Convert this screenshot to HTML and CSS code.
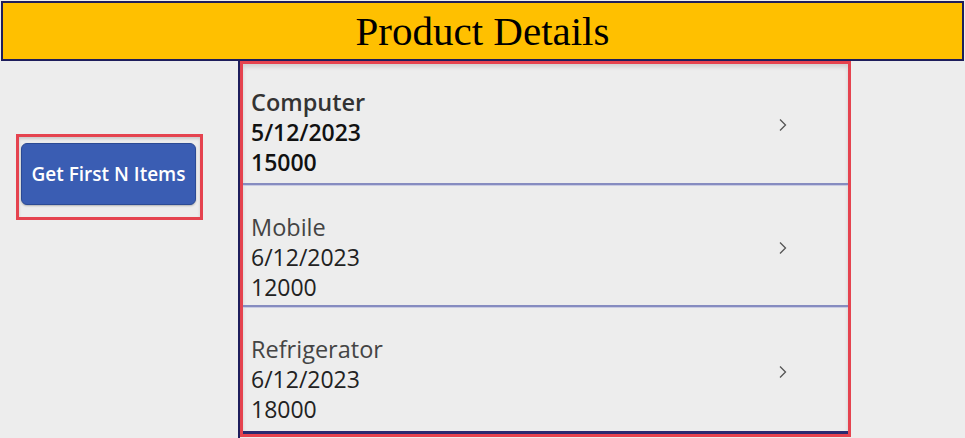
FILE: index.html
```html
<!DOCTYPE html>
<html lang="en">
<head>
<meta charset="UTF-8">
<title>Product Details</title>
<link rel="stylesheet" href="styles.css">
</head>
<body>
<div class="header">
    <h1>Product Details</h1>
</div>
<div class="screen">
    <div class="side">
        <div class="highlight btn-wrap">
            <button class="get-btn">Get First N Items</button>
        </div>
    </div>
    <div class="gallery">
        <div class="highlight list">
            <div class="item selected">
                <div class="lines">
                    <div class="title">Computer</div>
                    <div class="sub">5/12/2023</div>
                    <div class="sub">15000</div>
                </div>
                <svg class="chev" width="10" height="14" viewBox="0 0 10 14"><path d="M2 1.5 L7.5 7 L2 12.5" fill="none" stroke="#555" stroke-width="1.3"/></svg>
            </div>
            <div class="item">
                <div class="lines">
                    <div class="title">Mobile</div>
                    <div class="sub">6/12/2023</div>
                    <div class="sub">12000</div>
                </div>
                <svg class="chev" width="10" height="14" viewBox="0 0 10 14"><path d="M2 1.5 L7.5 7 L2 12.5" fill="none" stroke="#555" stroke-width="1.3"/></svg>
            </div>
            <div class="item last">
                <div class="lines">
                    <div class="title">Refrigerator</div>
                    <div class="sub">6/12/2023</div>
                    <div class="sub">18000</div>
                </div>
                <svg class="chev" width="10" height="14" viewBox="0 0 10 14"><path d="M2 1.5 L7.5 7 L2 12.5" fill="none" stroke="#555" stroke-width="1.3"/></svg>
            </div>
        </div>
    </div>
</div>
</body>
</html>
```
FILE: styles.css
```css
body {
    margin: 0;
    background-color: #ededed;
    font-family: "Open Sans", "Noto Sans", sans-serif;
    width: 965px;
    height: 438px;
    overflow: hidden;
}
.header {
    margin: 1px 1px 0 1px;
    height: 56px;
    background-color: #ffc000;
    border: 2px solid #1e1e5c;
    display: flex;
    align-items: center;
    justify-content: center;
}
.header h1 {
    margin: 0;
    font-family: "Liberation Serif", "Times New Roman", serif;
    font-weight: normal;
    font-size: 41px;
    color: #000;
}
.screen {
    display: flex;
}
.side {
    width: 238px;
    padding-top: 73px;
}
.highlight {
    border: 3px solid #e5434f;
}
.btn-wrap {
    margin-left: 16px;
    width: 187px;
    height: 86px;
    padding: 6px 0 0 2px;
    box-sizing: border-box;
    box-shadow: inset 0 2px 3px rgba(0, 0, 0, 0.15);
}
.get-btn {
    width: 175px;
    height: 62px;
    background-color: #3a5db3;
    border: 1px solid #2b4a94;
    border-radius: 6px;
    color: #fff;
    font-family: "Open Sans", sans-serif;
    font-weight: 600;
    font-size: 19px;
    padding: 0;
    box-shadow: 0 1px 2px rgba(0, 0, 0, 0.25);
}
.gallery {
    border-left: 2px solid #1e1e5c;
    height: 378px;
}
.list {
    width: 605px;
    height: 370px;
    box-shadow: inset 0 3px 4px rgba(0, 0, 0, 0.12);
}
.item {
    height: 122px;
    box-sizing: border-box;
    padding: 27px 0 0 8px;
    border-bottom: 2px solid #868cc0;
    box-shadow: 0 1px 0 #c9cbe2;
    display: flex;
    align-items: flex-start;
}
.item.selected {
    height: 121px;
    padding-top: 23px;
}
.item.last {
    height: 127px;
    border-bottom: 3px solid #2a2a70;
    box-shadow: none;
}
.lines {
    flex: 1;
}
.title {
    font-size: 23.5px;
    line-height: 30px;
    color: #444;
}
.sub {
    font-size: 23px;
    line-height: 30px;
    color: #222;
}
.selected .title {
    font-weight: 600;
    color: #333;
}
.selected .sub {
    font-weight: 600;
    color: #111;
}
.chev {
    align-self: center;
    margin: -22px 60px 0 0;
}
.selected .chev {
    margin-top: -20px;
}
```
